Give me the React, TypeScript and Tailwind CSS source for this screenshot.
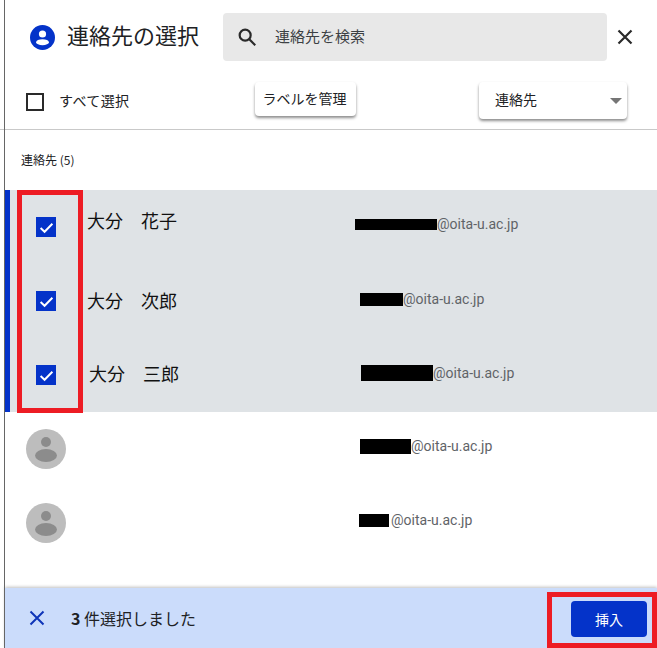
import React from "react";

const jp = "font-['Noto_Sans_CJK_JP','Liberation_Sans',sans-serif]";
const em = "font-['Roboto','Liberation_Sans',sans-serif]";

const Check = () => (
  <span className="w-5 h-5 bg-[#0433c9] flex items-center justify-center shrink-0">
    <svg width="15" height="15" viewBox="0 0 14 14" fill="none">
      <path d="M1.5 7.5 L5.2 11 L12.5 3.5" stroke="#fff" strokeWidth="1.8" />
    </svg>
  </span>
);

const Avatar = () => (
  <span className="w-10 h-10 rounded-full bg-[#bdbdbd] flex items-center justify-center shrink-0">
    <svg width="40" height="40" viewBox="0 0 40 40">
      <circle cx="20" cy="13" r="5" fill="#8c8c8c" />
      <ellipse cx="20" cy="26.5" rx="11" ry="6.5" fill="#8c8c8c" />
    </svg>
  </span>
);

const Mail = ({ w, h }: { w: string; h: string }) => (
  <span className={`${em} text-[14px] text-[#5f6368] flex items-center`}>
    <span className={`${w} ${h} bg-black inline-block`} />
    @oita-u.ac.jp
  </span>
);

export default function App() {
  return (
    <div className={`relative w-[657px] h-[648px] bg-white overflow-hidden flex flex-col ${jp} text-[#202124]`}>
      <div className="absolute left-1 top-0 bottom-0 w-px bg-[#666666]" />

      {/* header */}
      <div className="h-[74px] pt-[13px] pl-[30px] flex items-start shrink-0">
        <span className="w-[25px] h-[25px] mt-3 rounded-full bg-[#0433c9] flex items-center justify-center shrink-0">
          <svg width="25" height="25" viewBox="0 0 25 25">
            <circle cx="12.5" cy="9" r="3.6" fill="#fff" />
            <ellipse cx="12.5" cy="17.2" rx="6.4" ry="3" fill="#fff" />
          </svg>
        </span>
        <h1 className="ml-[12px] mt-[5px] text-[22px] leading-[33px] font-normal whitespace-nowrap w-[156px]">連絡先の選択</h1>
        <div className="w-[384px] h-12 rounded bg-[#e8e8e8] flex items-center pl-[13px]">
          <svg width="22" height="22" viewBox="0 0 24 24" fill="none" stroke="#2a2a2a" strokeWidth="2.4">
            <circle cx="10" cy="10" r="6" />
            <path d="M14.5 14.5 L21 21" />
          </svg>
          <span className="ml-[17px] mb-[2px] text-[15px] text-[#3c4043]">連絡先を検索</span>
        </div>
        <svg className="ml-[9px] mt-[15px]" width="18" height="18" viewBox="0 0 18 18" fill="none" stroke="#2a2a2a" strokeWidth="2.2">
          <path d="M2.5 2.5 L15.5 15.5 M15.5 2.5 L2.5 15.5" />
        </svg>
      </div>

      {/* toolbar */}
      <div className="h-[56px] border-b border-[#c9c9c9] pt-2 pl-[26px] flex items-start shrink-0">
        <span className="w-[18px] h-[18px] mt-[11px] border-2 border-[#2a2a2a] shrink-0" />
        <span className="ml-[15px] mt-[8px] w-[196px] text-[14px] tracking-[0.4px] leading-[21px] whitespace-nowrap">すべて選択</span>
        <button className="w-[101px] h-[34px] rounded bg-white shadow-[0_2px_3px_rgba(0,0,0,0.45)] text-[14px] leading-[30px] pb-[2px] pr-[2px] whitespace-nowrap text-[#202124]">
          ラベルを管理
        </button>
        <div className="ml-[123px] w-[148px] h-[37px] rounded bg-white shadow-[0_2px_3px_rgba(0,0,0,0.45)] flex items-center justify-between pl-4 pr-[5px]">
          <span className="text-[14px] mb-[2px]">連絡先</span>
          <span className="w-0 h-0 border-x-[6px] border-x-transparent border-t-[6px] border-t-[#757575]" />
        </div>
      </div>

      {/* section label */}
      <div className="h-[60px] pl-[21px] pt-[20px] text-[12px] leading-[20px] shrink-0">連絡先 (5)</div>

      {/* selected rows */}
      <div className="ml-[5px] bg-[#dfe3e6] border-l-[5px] border-[#0433c9] shrink-0 text-[#111111]">
        <div className="h-[74px] flex items-center pl-[26px]">
          <Check />
          <span className="ml-[31px] w-[268px] mb-[14px] text-[18px] whitespace-nowrap">大分　花子</span>
          <span className="mb-[6px]"><Mail w="w-[82px]" h="h-[11px]" /></span>
        </div>
        <div className="h-[74px] flex items-center pl-[26px]">
          <Check />
          <span className="ml-[31px] w-[273px] mb-[2px] text-[18px] whitespace-nowrap">大分　次郎</span>
          <span className="mb-1"><Mail w="w-[43px]" h="h-[13px]" /></span>
        </div>
        <div className="h-[74px] flex items-center pl-[26px]">
          <Check />
          <span className="ml-[33px] w-[272px] mb-1 text-[18px] whitespace-nowrap">大分　三郎</span>
          <span className="mb-1"><Mail w="w-[72px]" h="h-4" /></span>
        </div>
      </div>

      {/* other rows */}
      <div className="h-[74px] pl-[26px] flex items-center shrink-0">
        <Avatar />
        <span className="ml-[294px] mb-[6px]"><Mail w="w-[51px]" h="h-[15px]" /></span>
      </div>
      <div className="h-[74px] pl-[26px] flex items-center shrink-0">
        <Avatar />
        <span className="ml-[293px] mb-[6px]"><Mail w="w-[30px] mr-[2px]" h="h-[13px]" /></span>
      </div>

      <div className="flex-1" />

      {/* footer */}
      <div className="ml-[5px] h-[60px] bg-[#cbdcfb] shadow-[0_-1px_3px_rgba(0,0,0,0.25)] flex items-center pl-6 pr-[10px] shrink-0">
        <svg width="16" height="16" viewBox="0 0 16 16" fill="none" stroke="#0f35b8" strokeWidth="2">
          <path d="M1.5 1.5 L14.5 14.5 M14.5 1.5 L1.5 14.5" />
        </svg>
        <span className="ml-[26px] text-[16px] flex-1 whitespace-nowrap"><b>3</b> 件選択しました</span>
        <button className="w-[76px] h-9 mt-[2px] rounded bg-[#0433c9] text-white text-[14px]">挿入</button>
      </div>

      {/* red annotation frames */}
      <div className="absolute left-[17px] top-[190px] w-[66px] h-[223px] border-[5px] border-[#ed1c24]" />
      <div className="absolute left-[547px] top-[592px] w-[110px] h-[56px] border-[5px] border-[#ed1c24]" />
    </div>
  );
}
